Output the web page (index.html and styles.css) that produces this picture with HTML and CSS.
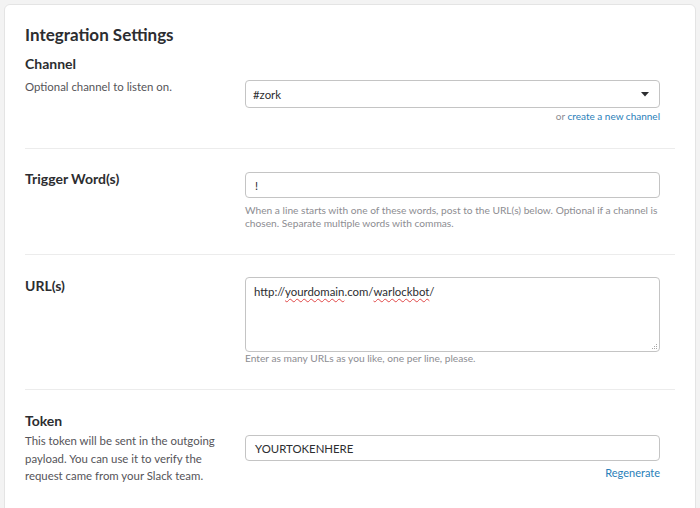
FILE: index.html
```html
<!DOCTYPE html>
<html>
<head>
<meta charset="utf-8">
<link rel="stylesheet" href="styles.css">
</head>
<body>
<div class="card">
  <h2 class="title">Integration Settings</h2>

  <section class="section section-channel">
    <h3 class="label">Channel</h3>
    <div class="grid grid-channel">
      <p class="desc">Optional channel to listen on.</p>
      <div class="field field-select">
        <div class="select">
          <span>#zork</span>
          <svg class="caret" width="8" height="5" viewBox="0 0 8 5"><path d="M0 0h8L4 4.5z" fill="#2c2d30"/></svg>
        </div>
        <div class="aside"><span class="muted">or</span> <a class="link">create a new channel</a></div>
      </div>
    </div>
  </section>

  <section class="section section-trigger">
    <div class="grid">
      <h3 class="label">Trigger Word(s)</h3>
      <div class="field field-input">
        <div class="input">!</div>
        <p class="help">When a line starts with one of these words, post to the URL(s) below. Optional if a channel is chosen. Separate multiple words with commas.</p>
      </div>
    </div>
  </section>

  <section class="section section-url">
    <div class="grid">
      <h3 class="label">URL(s)</h3>
      <div class="field">
        <div class="textarea">http://<span class="spell">yourdomain</span>.com/<span class="spell">warlockbot</span>/<svg class="grip" width="7" height="7" viewBox="0 0 7 7"><g fill="#a8a8a8"><rect x="5" y="1" width="1" height="1"/><rect x="3" y="3" width="1" height="1"/><rect x="5" y="3" width="1" height="1"/><rect x="1" y="5" width="1" height="1"/><rect x="3" y="5" width="1" height="1"/><rect x="5" y="5" width="1" height="1"/></g></svg></div>
        <p class="help help-tight">Enter as many URLs as you like, one per line, please.</p>
      </div>
    </div>
  </section>

  <section class="section section-token">
    <h3 class="label">Token</h3>
    <div class="grid grid-token">
      <p class="desc desc-token">This token will be sent in the outgoing payload. You can use it to verify the request came from your Slack team.</p>
      <div class="field field-token">
        <div class="input">YOURTOKENHERE</div>
        <div class="aside aside-token"><a class="link">Regenerate</a></div>
      </div>
    </div>
  </section>
</div>
</body>
</html>
```

FILE: styles.css
```css
html, body {
  margin: 0;
  padding: 0;
}
body {
  background: #f3f3f3;
  font-family: Lato, "Open Sans", sans-serif;
  color: #2c2d30;
  height: 508px;
  overflow: hidden;
}
.card {
  margin: 4px 4px 0 4px;
  background: #fff;
  border: 1px solid #e4e4e4;
  border-radius: 6px;
  padding: 19px 20px 40px 20px;
  min-height: 560px;
}
.title {
  margin: 0;
  font-size: 17px;
  line-height: 22px;
  font-weight: 700;
}
.section {
  border-bottom: 1px solid #ececec;
}
.label {
  margin: 0;
  font-size: 14px;
  line-height: 18px;
  font-weight: 700;
}
.grid {
  display: grid;
  grid-template-columns: 220px 415px;
  align-items: start;
}
.desc {
  margin: 0;
  font-size: 11.4px;
  line-height: 17px;
  color: #555459;
}

/* Channel */
.section-channel {
  margin-top: 9px;
  padding-bottom: 25px;
}
.grid-channel {
  margin-top: 5px;
}
.field-select {
  margin-top: 2px;
}
.select {
  height: 28px;
  box-sizing: border-box;
  border: 1px solid #c4c4c4;
  border-radius: 4px;
  display: flex;
  align-items: center;
  justify-content: space-between;
  padding: 0 10px 0 7px;
  font-size: 11.4px;
}
.caret {
  display: block;
}
.aside {
  text-align: right;
  font-size: 10px;
  line-height: 13px;
  margin-top: 2px;
}
.muted {
  color: #8d8d92;
}
.link {
  color: #2a80b9;
}

/* Trigger */
.section-trigger {
  padding-top: 21px;
  padding-bottom: 24px;
}
.field-input {
  margin-top: 2px;
}
.input {
  height: 26px;
  box-sizing: border-box;
  border: 1px solid #c4c4c4;
  border-radius: 4px;
  display: flex;
  align-items: center;
  padding: 0 9px;
  font-size: 11.4px;
}
.help {
  margin: 6px 0 0 0;
  font-size: 10.2px;
  line-height: 13px;
  color: #8d8d92;
}

/* URL */
.section-url {
  padding-top: 22px;
  padding-bottom: 24px;
}
.textarea {
  position: relative;
  height: 75px;
  box-sizing: border-box;
  border: 1px solid #c4c4c4;
  border-radius: 4px;
  padding: 7px 8px;
  font-size: 11.4px;
  line-height: 14px;
}
.spell {
  text-decoration: underline wavy #e04848;
  text-decoration-thickness: 0.5px;
  text-underline-offset: 1.5px;
}
.grip {
  position: absolute;
  right: 1px;
  bottom: 1px;
  display: block;
}
.help-tight {
  margin-top: 0;
}

/* Token */
.section-token {
  border-bottom: none;
  padding-top: 22px;
}
.grid-token {
  margin-top: 2px;
}
.desc-token {
  line-height: 17.5px;
  padding-right: 22px;
}
.field-token {
  margin-top: 3px;
}
.aside-token {
  font-size: 11px;
  line-height: 14px;
  margin-top: 5px;
}
```
